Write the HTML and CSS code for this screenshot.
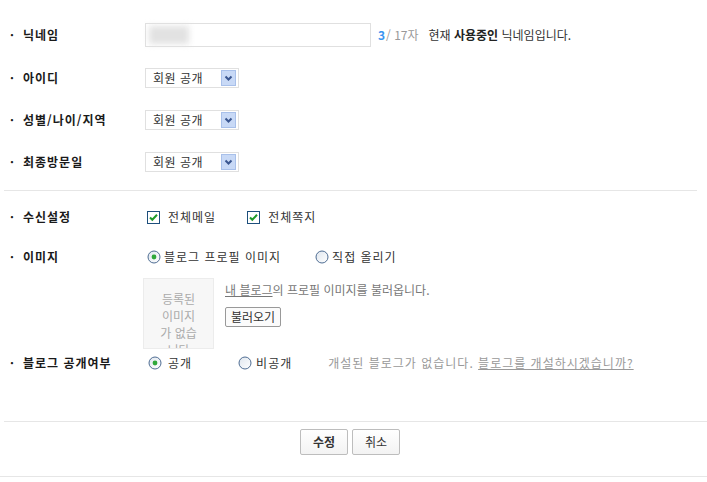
FILE: index.html
```html
<!DOCTYPE html>
<html lang="ko">
<head>
<meta charset="utf-8">
<title>프로필 설정</title>
<link rel="stylesheet" href="styles.css">
</head>
<body>
<div class="page">
  <section class="group group-top">
    <div class="row row-nick">
      <div class="label">닉네임</div>
      <div class="field">
        <div class="input"><span class="blurred"></span></div>
        <span class="count"><b>3</b>/ 17자</span>
        <span class="status">현재 <b>사용중인</b> 닉네임입니다.</span>
      </div>
    </div>
    <div class="row row-sel">
      <div class="label">아이디</div>
      <div class="field">
        <div class="select"><span class="sel-text">회원 공개</span><svg class="sel-btn" width="15" height="16" viewBox="0 0 15 16"><rect x="0.5" y="0.5" width="14" height="15" fill="#c8d9f6" stroke="#a8c0ea"/><path d="M4.5 6.5 L7.5 9.5 L10.5 6.5" fill="none" stroke="#3a5690" stroke-width="2"/></svg></div>
      </div>
    </div>
    <div class="row row-sel">
      <div class="label">성별/나이/지역</div>
      <div class="field">
        <div class="select"><span class="sel-text">회원 공개</span><svg class="sel-btn" width="15" height="16" viewBox="0 0 15 16"><rect x="0.5" y="0.5" width="14" height="15" fill="#c8d9f6" stroke="#a8c0ea"/><path d="M4.5 6.5 L7.5 9.5 L10.5 6.5" fill="none" stroke="#3a5690" stroke-width="2"/></svg></div>
      </div>
    </div>
    <div class="row row-sel">
      <div class="label">최종방문일</div>
      <div class="field">
        <div class="select"><span class="sel-text">회원 공개</span><svg class="sel-btn" width="15" height="16" viewBox="0 0 15 16"><rect x="0.5" y="0.5" width="14" height="15" fill="#c8d9f6" stroke="#a8c0ea"/><path d="M4.5 6.5 L7.5 9.5 L10.5 6.5" fill="none" stroke="#3a5690" stroke-width="2"/></svg></div>
      </div>
    </div>
  </section>

  <div class="divider"></div>

  <section class="group group-mid">
    <div class="row row-check">
      <div class="label">수신설정</div>
      <div class="field">
        <span class="opt opt-check"><svg class="ico-check" width="13" height="13" viewBox="0 0 13 13"><rect x="0.5" y="0.5" width="12" height="12" fill="#fff" stroke="#1d4f7c"/><path d="M3 6.5 L5.3 8.8 L10 3.8" fill="none" stroke="#1f9b2a" stroke-width="2"/></svg><span class="opt-text">전체메일</span></span>
        <span class="opt opt-check opt-second"><svg class="ico-check" width="13" height="13" viewBox="0 0 13 13"><rect x="0.5" y="0.5" width="12" height="12" fill="#fff" stroke="#1d4f7c"/><path d="M3 6.5 L5.3 8.8 L10 3.8" fill="none" stroke="#1f9b2a" stroke-width="2"/></svg><span class="opt-text">전체쪽지</span></span>
      </div>
    </div>
    <div class="row row-radio">
      <div class="label">이미지</div>
      <div class="field">
        <span class="opt opt-radio"><svg class="ico-radio" width="14" height="14" viewBox="0 0 14 14"><defs><linearGradient id="rg1" x1="0" y1="0" x2="1" y2="1"><stop offset="0" stop-color="#dfe6ee"/><stop offset="1" stop-color="#ffffff"/></linearGradient></defs><circle cx="7" cy="7" r="6" fill="url(#rg1)" stroke="#4f6d93"/><circle cx="7" cy="7" r="2.4" fill="#2fa83a"/></svg><span class="opt-text">블로그 프로필 이미지</span></span>
        <span class="opt opt-radio opt-second"><svg class="ico-radio" width="14" height="14" viewBox="0 0 14 14"><defs><linearGradient id="rg2" x1="0" y1="0" x2="1" y2="1"><stop offset="0" stop-color="#dfe6ee"/><stop offset="1" stop-color="#ffffff"/></linearGradient></defs><circle cx="7" cy="7" r="6" fill="url(#rg2)" stroke="#4f6d93"/></svg><span class="opt-text">직접 올리기</span></span>
      </div>
    </div>
    <div class="image-block">
      <div class="img-box">등록된 이미지가 없습니다</div>
      <div class="img-side">
        <p class="img-note"><a class="u-link">내 블로그</a>의 프로필 이미지를 불러옵니다.</p>
        <button class="btn-small" type="button">불러오기</button>
      </div>
    </div>
    <div class="row row-blog">
      <div class="label">블로그 공개여부</div>
      <div class="field">
        <span class="opt opt-radio"><svg class="ico-radio" width="14" height="14" viewBox="0 0 14 14"><defs><linearGradient id="rg3" x1="0" y1="0" x2="1" y2="1"><stop offset="0" stop-color="#dfe6ee"/><stop offset="1" stop-color="#ffffff"/></linearGradient></defs><circle cx="7" cy="7" r="6" fill="url(#rg3)" stroke="#4f6d93"/><circle cx="7" cy="7" r="2.4" fill="#2fa83a"/></svg><span class="opt-text">공개</span></span>
        <span class="opt opt-radio opt-blog2"><svg class="ico-radio" width="14" height="14" viewBox="0 0 14 14"><defs><linearGradient id="rg4" x1="0" y1="0" x2="1" y2="1"><stop offset="0" stop-color="#dfe6ee"/><stop offset="1" stop-color="#ffffff"/></linearGradient></defs><circle cx="7" cy="7" r="6" fill="url(#rg4)" stroke="#4f6d93"/></svg><span class="opt-text">비공개</span></span>
        <span class="blog-note">개설된 블로그가 없습니다. <a class="u-link">블로그를 개설하시겠습니까?</a></span>
      </div>
    </div>
  </section>

  <div class="divider divider-actions"></div>
  <div class="actions">
    <button class="btn btn-primary" type="button">수정</button>
    <button class="btn" type="button">취소</button>
  </div>
  <div class="divider divider-bottom"></div>
</div>
</body>
</html>
```

FILE: styles.css
```css
* { box-sizing: border-box; }
html, body { margin: 0; padding: 0; background: #fff; }
body {
  font-family: "Noto Sans CJK KR", "Noto Sans", sans-serif;
  font-size: 12px;
  color: #333;
  line-height: 14px;
}
.page { width: 707px; }

.group-top { padding-top: 23px; }
.row { display: flex; align-items: center; }
.label {
  width: 145px;
  flex: none;
  padding-left: 10px;
  font-weight: bold;
  color: #1a1a1a;
  letter-spacing: 1px;
  display: flex;
}
.label::before {
  content: "·";
  width: 13px;
  flex: none;
  font-weight: bold;
}
.field { display: flex; align-items: center; }

.row-nick { height: 24px; }
.input {
  width: 226px;
  height: 24px;
  border: 1px solid #e0e0e0;
  background: #fff;
  padding: 2px 0 0 3px;
}
.blurred {
  display: block;
  width: 40px;
  height: 18px;
  background: #e2e2e2;
  filter: blur(3px);
}
.count { margin-left: 7px; color: #999; }
.count b { color: #3894f0; margin-right: 1px; }
.status { margin-left: 10px; color: #333; }
.status b { color: #222; }

.row-sel { height: 20px; margin-top: 21px; }
.row-sel + .row-sel { margin-top: 22px; }
.select {
  width: 94px;
  height: 20px;
  border: 1px solid #e0e0e0;
  display: flex;
  align-items: center;
  justify-content: space-between;
  padding: 0 2px 0 7px;
}
.sel-text { color: #333; letter-spacing: 0.5px; }
.sel-btn { display: block; }

.divider { height: 1px; background: #e6e6e6; margin: 18px 10px 0 4px; }

.group-mid { padding-top: 16px; }
.row-check { height: 20px; }
.row-radio { height: 20px; margin-top: 20px; }
.opt { display: flex; align-items: center; }
.opt-text { letter-spacing: 1px; }
.ico-check, .ico-radio { display: block; flex: none; }
.opt-check { margin-left: 2px; }
.opt-check .opt-text { margin-left: 8px; }
.opt-check.opt-second { margin-left: 31px; }
.opt-radio { margin-left: 2px; }
.opt-radio .opt-text { margin-left: 3px; }
.opt-radio.opt-second { margin-left: 34px; }

.image-block { display: flex; margin: 11px 0 0 143px; }
.img-box {
  width: 71px;
  height: 71px;
  flex: none;
  overflow: hidden;
  background: #f7f7f7;
  border: 1px solid #ececec;
  color: #aaa;
  text-align: center;
  padding: 11px 14px 0;
  line-height: 17px;
}
.img-side { margin-left: 11px; padding-top: 5px; }
.img-note { margin: 0; color: #777; }
.u-link { color: inherit; text-decoration: underline; }
.btn-small {
  margin-top: 10px;
  height: 20px;
  padding: 0 5px;
  font: inherit;
  color: #333;
  background: #fbfbfb;
  border: 1px solid #999;
  border-radius: 2px;
  line-height: 16px;
}

.row-blog { height: 20px; margin-top: 4px; }
.row-blog .opt-radio { margin-left: 3px; }
.row-blog .opt-radio .opt-text { margin-left: 6px; }
.row-blog .opt-blog2 { margin-left: 46px; }
.row-blog .opt-blog2 .opt-text { margin-left: 4px; }
.blog-note { margin-left: 36px; color: #999; letter-spacing: 1px; }

.divider-actions { margin-top: 48px; margin-right: 0; }
.actions { display: flex; justify-content: center; gap: 4px; margin-top: 7px; padding-right: 7px; }
.btn {
  width: 48px;
  height: 26px;
  font: inherit;
  color: #333;
  background: linear-gradient(#fff, #f3f3f3);
  border: 1px solid #bdbdbd;
  border-radius: 2px;
  padding: 0;
}
.btn-primary { font-weight: bold; }
.divider-bottom { margin: 21px 0 0 0; }
```
